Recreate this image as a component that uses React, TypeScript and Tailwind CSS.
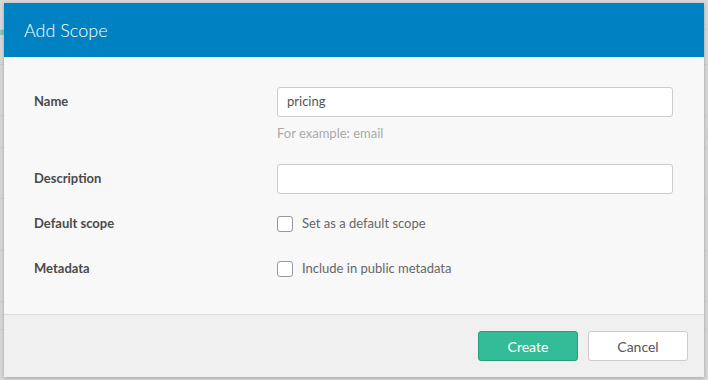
import React from "react";

const font = { fontFamily: "Lato, 'Open Sans', Arial, sans-serif" };

function Checkbox({ label }: { label: string }) {
  return (
    <label className="flex items-center gap-[9px] text-[13px] text-[#666]">
      <span className="h-[16px] w-[16px] rounded-[3px] border border-[#999] bg-white" />
      {label}
    </label>
  );
}

export default function App() {
  return (
    <div
      className="relative h-[380px] w-[708px] overflow-hidden bg-[#d8d8d8]"
      style={font}
    >
      {/* page behind the backdrop */}
      <div className="flex flex-col">
        <div className="h-[30px] border-b border-[#cfcfcf]" />
        <div className="h-[5px] w-[6px] bg-[#8fc4b4]" />
        <div className="h-[30px] border-b border-[#cfcfcf]" />
        <div className="h-[51px] border-b border-[#cfcfcf]" />
        <div className="flex h-[32px] justify-end border-b border-[#cfcfcf] pt-[8px] text-[13px] text-[#b0957f]">
          <span className="-mr-[6px]">F</span>
        </div>
        <div className="h-[51px] border-b border-[#cfcfcf]" />
        <div className="h-[52px] border-b border-[#cfcfcf]" />
        <div className="h-[51px] border-b border-[#cfcfcf]" />
        <div className="h-[28px] border-b border-[#cfcfcf]" />
      </div>

      {/* modal */}
      <div className="absolute left-[4px] top-[3px] flex h-[374px] w-[700px] flex-col bg-[#f8f8f8] shadow-[0_1px_4px_rgba(0,0,0,0.25)]">
        <div className="flex h-[54px] items-center bg-[#0081c1] px-[20px]">
          <h1 className="text-[18px] font-light text-white">Add Scope</h1>
        </div>

        <div className="flex flex-1 flex-col pl-[30px] pr-[31px] pt-[30px]">
          <div className="flex">
            <div className="flex h-[30px] w-[243px] items-center text-[13px] font-bold text-[#4a4a4a]">
              Name
            </div>
            <div className="flex flex-1 flex-col">
              <div className="flex h-[30px] items-center rounded-[3px] border border-[#ccc] bg-white px-[9px] text-[13px] text-[#555]">
                pricing
              </div>
              <div className="mt-[8px] text-[13px] leading-[16px] text-[#aaa]">
                For example: email
              </div>
            </div>
          </div>

          <div className="mt-[23px] flex">
            <div className="flex h-[30px] w-[243px] items-center text-[13px] font-bold text-[#4a4a4a]">
              Description
            </div>
            <div className="h-[30px] flex-1 rounded-[3px] border border-[#ccc] bg-white" />
          </div>

          <div className="mt-[20px] flex h-[20px] items-center">
            <div className="w-[243px] text-[13px] font-bold text-[#4a4a4a]">
              Default scope
            </div>
            <Checkbox label="Set as a default scope" />
          </div>

          <div className="mt-[25px] flex h-[20px] items-center">
            <div className="w-[243px] text-[13px] font-bold text-[#4a4a4a]">
              Metadata
            </div>
            <Checkbox label="Include in public metadata" />
          </div>
        </div>

        <div className="flex h-[63px] justify-end gap-[10px] border-t border-[#dcdcdc] bg-[#f0f0f0] pr-[16px] pt-[16px]">
          <button className="h-[30px] w-[100px] rounded-[3px] border border-[#2a9b7c] bg-[#34bb97] text-[14px] text-white">
            Create
          </button>
          <button className="h-[30px] w-[100px] rounded-[3px] border border-[#ccc] bg-white text-[14px] text-[#555]">
            Cancel
          </button>
        </div>
      </div>
    </div>
  );
}
